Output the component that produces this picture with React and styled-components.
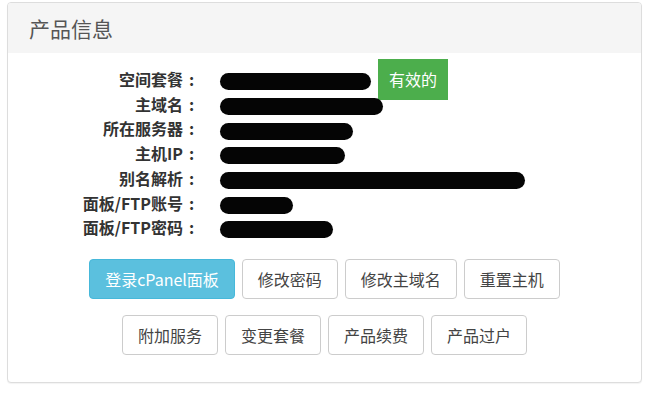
import React from "react";
import styled, { createGlobalStyle } from "styled-components";

const GlobalStyle = createGlobalStyle`
  body {
    margin: 0;
    background: #ffffff;
    font-family: "Noto Sans CJK SC", "Liberation Sans", sans-serif;
    color: #333333;
  }
`;

const Page = styled.div`
  width: 655px;
  height: 400px;
  padding: 2px 13px 0 7px;
  box-sizing: border-box;
`;

const Panel = styled.div`
  border: 1px solid #dddddd;
  border-radius: 4px;
  box-shadow: 0 1px 1px rgba(0, 0, 0, 0.05);
  background: #ffffff;
  overflow: hidden;
`;

const Heading = styled.div`
  background: #f5f5f5;
  height: 50px;
  display: flex;
  align-items: center;
  padding: 0 21px;
`;

const Title = styled.h3`
  margin: 0;
  font-size: 21px;
  font-weight: normal;
  color: #555555;
  line-height: 1;
`;

const Body = styled.div`
  padding: 14px 15px 27px;
`;

const InfoList = styled.div`
  display: grid;
  grid-template-columns: 177px 1fr;
  column-gap: 20px;
  line-height: 24.7px;
`;

const Label = styled.div`
  text-align: right;
  font-size: 16px;
  font-weight: bold;
  color: #333333;
  white-space: nowrap;
`;

const Colon = styled.span`
  display: inline-block;
  width: 17px;
  text-align: center;
`;

const Value = styled.div`
  font-size: 16px;
  white-space: nowrap;
`;

const Redacted = styled.span`
  display: inline-block;
  vertical-align: middle;
  width: ${(p) => p.w}px;
  height: ${(p) => p.h || 17}px;
  background: #050505;
  border-radius: ${(p) => (p.h || 17) / 2}px;
`;

const Badge = styled.span`
  display: inline;
  margin-left: 7px;
  padding: 8px 11px 9px;
  background: #4cae4c;
  color: #ffffff;
  font-size: 16px;
  font-weight: normal;
`;

const Actions = styled.div`
  margin-top: 19px;
  display: flex;
  flex-direction: column;
  align-items: center;
  gap: 16px;
`;

const ButtonRow = styled.div`
  display: flex;
  gap: 7px;
`;

const Button = styled.button`
  font-family: inherit;
  font-size: 16px;
  line-height: 22px;
  padding: 8px 15px;
  border-radius: 4px;
  border: 1px solid ${(p) => (p.$info ? "#46b8da" : "#cccccc")};
  background: ${(p) => (p.$info ? "#5bc0de" : "#ffffff")};
  color: ${(p) => (p.$info ? "#ffffff" : "#444444")};
  cursor: pointer;
`;

const rows = [
  { label: "空间套餐", w: 151, badge: "有效的" },
  { label: "主域名", w: 163 },
  { label: "所在服务器", w: 133 },
  { label: "主机IP", w: 125 },
  { label: "别名解析", w: 305 },
  { label: "面板/FTP账号", w: 73 },
  { label: "面板/FTP密码", w: 113 },
];

const App = () => {
  return (
    <>
      <GlobalStyle />
      <Page>
        <Panel>
          <Heading>
            <Title>产品信息</Title>
          </Heading>
          <Body>
            <InfoList>
              {rows.map((row) => (
                <React.Fragment key={row.label}>
                  <Label>
                    {row.label}
                    <Colon>:</Colon>
                  </Label>
                  <Value>
                    <Redacted w={row.w} />
                    {row.badge ? <Badge>{row.badge}</Badge> : null}
                  </Value>
                </React.Fragment>
              ))}
            </InfoList>
            <Actions>
              <ButtonRow>
                <Button $info>登录cPanel面板</Button>
                <Button>修改密码</Button>
                <Button>修改主域名</Button>
                <Button>重置主机</Button>
              </ButtonRow>
              <ButtonRow>
                <Button>附加服务</Button>
                <Button>变更套餐</Button>
                <Button>产品续费</Button>
                <Button>产品过户</Button>
              </ButtonRow>
            </Actions>
          </Body>
        </Panel>
      </Page>
    </>
  );
};

export default App;
